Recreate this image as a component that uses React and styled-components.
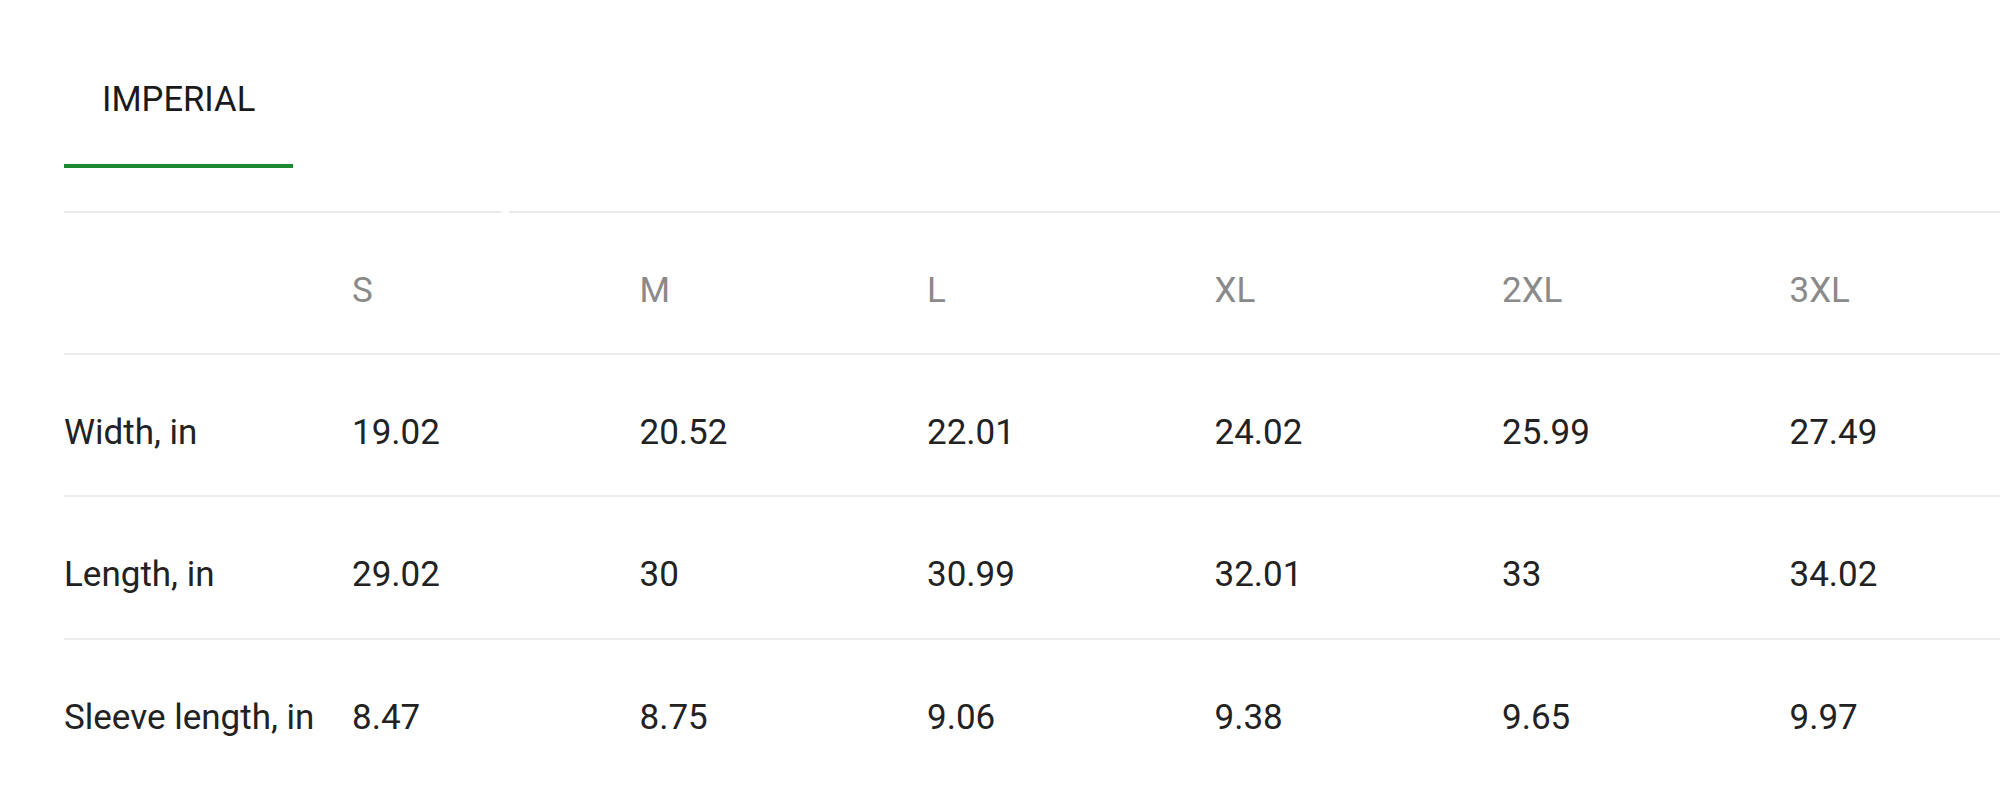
import React from "react";
import styled, { createGlobalStyle } from "styled-components";

const Global = createGlobalStyle`
  html, body { margin: 0; padding: 0; background: #ffffff; }
  body { font-family: Roboto, "Liberation Sans", Arial, sans-serif; overflow: hidden; }
`;

const Page = styled.div`
  width: 100%;
  overflow: hidden;
  padding-left: 64px;
  box-sizing: border-box;
`;

const Tabs = styled.div`
  display: flex;
`;

const Tab = styled.div`
  padding: 79px 38px 44px;
  font-size: 34.6px;
  line-height: 41px;
  color: #1a1a1a;
  border-bottom: 4px solid ${(p) => (p.$active ? "#1b8a30" : "transparent")};
`;

const Table = styled.div`
  position: relative;
  margin-top: 42.5px;
  border-top: 2px solid #e9e9e9;
  width: 2077px;
`;

const Notch = styled.span`
  position: absolute;
  left: 436px;
  top: -2px;
  width: 0;
  height: 0;
  border-left: 5px solid transparent;
  border-right: 5px solid transparent;
  border-top: 4px solid #ffffff;
`;

const Row = styled.div`
  display: grid;
  grid-template-columns: 288px repeat(6, 287.5px);
  padding: 57px 0 42.4px;
  border-bottom: 2px solid ${(p) => (p.$last ? "transparent" : "#ececec")};
`;

const Cell = styled.div`
  font-size: 35px;
  line-height: 41px;
  white-space: nowrap;
  color: ${(p) => (p.$head ? "#8a8a8a" : "#222222")};
`;

const sizes = ["S", "M", "L", "XL", "2XL", "3XL"];
const rows = [
  ["Width, in", ["19.02", "20.52", "22.01", "24.02", "25.99", "27.49"]],
  ["Length, in", ["29.02", "30", "30.99", "32.01", "33", "34.02"]],
  ["Sleeve length, in", ["8.47", "8.75", "9.06", "9.38", "9.65", "9.97"]],
];

export default function App() {
  return (
    <>
      <Global />
      <Page>
        <Tabs>
          <Tab $active>IMPERIAL</Tab>
        </Tabs>
        <Table>
          <Notch />
          <Row>
            <Cell $head />
            {sizes.map((s) => (
              <Cell $head key={s}>{s}</Cell>
            ))}
          </Row>
          {rows.map(([label, vals], i) => (
            <Row key={label} $last={i === rows.length - 1}>
              <Cell>{label}</Cell>
              {vals.map((v, j) => (
                <Cell key={j}>{v}</Cell>
              ))}
            </Row>
          ))}
        </Table>
      </Page>
    </>
  );
}
